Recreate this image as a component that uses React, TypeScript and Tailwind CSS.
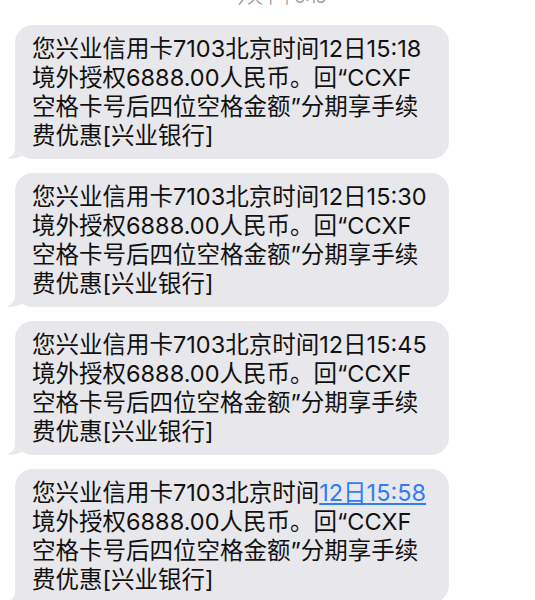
import React from "react";

const font = {
  fontFamily: '"Inter", "Noto Sans CJK SC", sans-serif',
};

const times = ["15:18", "15:30", "15:45", "15:58"];

const Tail = () => (
  <svg
    className="absolute left-[-8px] bottom-0"
    width="30"
    height="26"
    viewBox="0 0 30 26"
  >
    <path
      d="M8 0 L8 15 C8 20 5 23 0 26 C7 26 12 24.5 16 22 C19 24 23 26 30 26 L30 0 Z"
      fill="#e8e8ec"
    />
  </svg>
);

const Bubble = ({ time, link }: { time: string; link?: boolean }) => (
  <div className="relative w-[434px] h-[134px] rounded-[18px] bg-[#e8e8ec] pl-[17px] pt-[9px] text-[23.5px] leading-[29px] text-[#111] whitespace-nowrap">
    <Tail />
    <div className="relative">
      您兴业信用卡7103北京时间
      {link ? (
        <span className="text-[#2f7cf6] underline underline-offset-2">
          12日{time}
        </span>
      ) : (
        <>12日{time}</>
      )}
      <br />
      境外授权6888.00人民币。回“CCXF
      <br />
      空格卡号后四位空格金额”分期享手续
      <br />
      费优惠[兴业银行]
    </div>
  </div>
);

export default function App() {
  return (
    <div
      className="w-[535px] h-[600px] overflow-hidden bg-white"
      style={font}
    >
      <div className="h-[25px] flex justify-center">
        <span className="-mt-[12px] ml-[22px] text-[16px] leading-[18px] text-[#9b9b9f]">
          今天下午3:18
        </span>
      </div>
      <div className="flex flex-col gap-[14px] pl-[15px]">
        {times.map((t, i) => (
          <Bubble key={t} time={t} link={i === 3} />
        ))}
      </div>
    </div>
  );
}
